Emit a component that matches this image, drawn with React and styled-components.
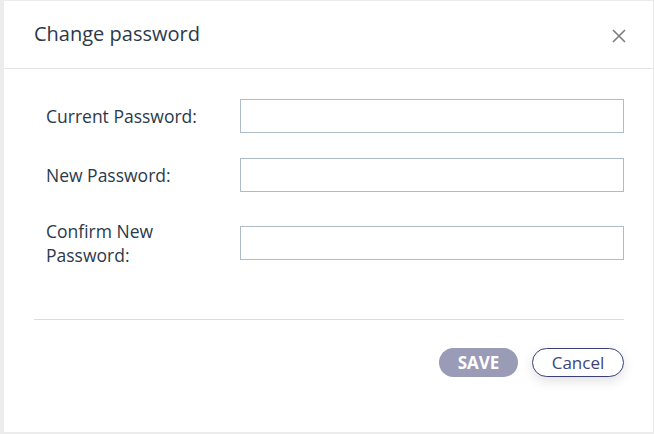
import React from 'react'
import styled, { createGlobalStyle } from 'styled-components'

const Global = createGlobalStyle`
    html, body {
        margin: 0;
        padding: 0;
        background: #ececec;
        font-family: "Open Sans", "Noto Sans", sans-serif;
    }
`

function App() {
    return (
        <>
            <Global />
            <Backdrop>
                <Modal>
                    <Header>
                        <Title>Change password</Title>
                        <CloseButton aria-label="close">
                            <svg width="14" height="14" viewBox="0 0 14 14">
                                <path d="M1 1L13 13M13 1L1 13" stroke="#7d7d7d" strokeWidth="1.6" />
                            </svg>
                        </CloseButton>
                    </Header>
                    <Body>
                        <Row>
                            <Label>Current Password:</Label>
                            <Input type="password" />
                        </Row>
                        <Row>
                            <Label>New Password:</Label>
                            <Input type="password" />
                        </Row>
                        <Row tall>
                            <Label>Confirm New<br />Password:</Label>
                            <Input type="password" />
                        </Row>
                    </Body>
                    <Footer>
                        <Button kind="save">SAVE</Button>
                        <Button kind="cancel">Cancel</Button>
                    </Footer>
                </Modal>
            </Backdrop>
        </>
    )
}

export default App

const Backdrop = styled.div`
    width: 654px;
    height: 434px;
    box-sizing: border-box;
    padding: 1px 1px 2px 4px;
    background: #ececec;
    overflow: hidden;
`

const Modal = styled.div`
    width: 649px;
    height: 431px;
    background: #ffffff;
    display: flex;
    flex-direction: column;
`

const Header = styled.div`
    height: 67px;
    border-bottom: 1px solid #e4e4e4;
    display: flex;
    align-items: center;
    justify-content: space-between;
    padding: 0 27px 0 30px;
`

const Title = styled.h2`
    margin: 0;
    font-size: 20px;
    font-weight: 400;
    color: #2b3a4a;
    padding-bottom: 2px;
`

const CloseButton = styled.button`
    border: none;
    background: none;
    padding: 0;
    width: 14px;
    height: 14px;
    display: flex;
    cursor: pointer;
    margin-top: 2px;
`

const Body = styled.div`
    padding: 30px 29px 0 42px;
    display: flex;
    flex-direction: column;
    gap: 25px;
`

const Row = styled.div`
    display: flex;
    align-items: center;
    min-height: ${props => props.tall ? '52' : '34'}px;
`

const Label = styled.label`
    width: 194px;
    flex-shrink: 0;
    font-size: 17.5px;
    line-height: 24px;
    color: #2b3a4a;
`

const Input = styled.input`
    flex: 1;
    height: 34px;
    box-sizing: border-box;
    border: 1px solid #aebbc8;
    border-radius: 0;
    outline: none;
    padding: 0 8px;
    font-size: 14px;
`

const Footer = styled.div`
    margin: 50px 29px 0 30px;
    border-top: 1px solid #dcdce4;
    padding-top: 28px;
    display: flex;
    justify-content: flex-end;
    gap: 14px;
`

const Button = styled.button`
    height: 29px;
    border-radius: 15px;
    font-family: "Open Sans", "Noto Sans", sans-serif;
    font-size: 17px;
    font-weight: ${props => props.kind === 'save' ? '700' : '400'};
    width: ${props => props.kind === 'save' ? '79' : '92'}px;
    padding: 0;
    cursor: pointer;
    background: ${props => props.kind === 'save' ? '#9a9bb6' : '#ffffff'};
    color: ${props => props.kind === 'save' ? '#ffffff' : '#3d4379'};
    border: ${props => props.kind === 'save' ? 'none' : '1px solid #3a3f78'};
    box-shadow: ${props => props.kind === 'save' ? 'none' : '0 4px 12px rgba(0,0,0,0.12)'};
`
